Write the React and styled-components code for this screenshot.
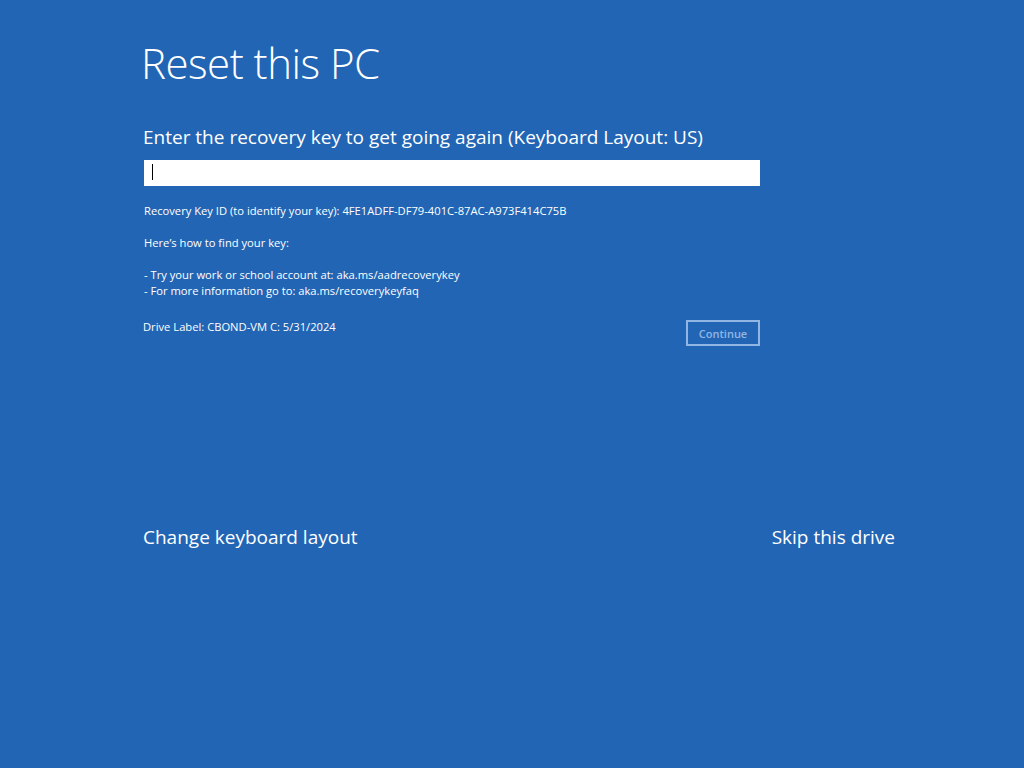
import React from 'react';
import styled, { createGlobalStyle } from 'styled-components';

const GlobalStyle = createGlobalStyle`
  * {
    margin: 0;
    padding: 0;
    box-sizing: border-box;
  }

  html, body {
    height: 100%;
  }

  body {
    background: #2265b4;
    color: #ffffff;
    font-family: 'Open Sans', 'Noto Sans', sans-serif;
    overflow: hidden;
  }
`;

const Screen = styled.div`
  width: 1024px;
  height: 768px;
  background: #2265b4;
  padding: 33px 0 0 141px;
  display: flex;
  flex-direction: column;
`;

const Title = styled.h1`
  font-size: 42px;
  font-weight: 300;
  line-height: 60px;
  letter-spacing: -0.5px;
`;

const Prompt = styled.h2`
  font-size: 19px;
  font-weight: 400;
  line-height: 26px;
  margin: 31px 0 0 2px;
`;

const Form = styled.div`
  width: 616px;
  margin-left: 3px;
`;

const KeyInput = styled.div`
  height: 26px;
  background: #ffffff;
  margin-top: 10px;
  padding: 4px 0 0 8px;
`;

const Caret = styled.span`
  display: block;
  width: 1px;
  height: 16px;
  background: #000000;
`;

const Info = styled.div`
  margin-top: 17px;
  font-size: 11.2px;
  line-height: 16px;
`;

const Line = styled.p`
  min-height: 16px;
`;

const FooterRow = styled.div`
  display: flex;
  align-items: flex-start;
  justify-content: space-between;
  margin-top: 20px;
`;

const DriveLabel = styled.p`
  font-size: 11.2px;
  line-height: 16px;
  margin-left: -1px;
`;

const ContinueButton = styled.button`
  width: 74px;
  height: 26px;
  background: transparent;
  border: 2px solid #92b6e4;
  color: #92b6e4;
  font-family: inherit;
  font-size: 11px;
  font-weight: 600;
  margin-top: 1px;
`;

const Links = styled.div`
  width: 752px;
  display: flex;
  justify-content: space-between;
  margin-top: 178px;
  margin-left: 2px;
`;

const LinkText = styled.span`
  font-size: 19px;
  line-height: 26px;
  font-weight: 400;
`;

export default function App() {
  return (
    <>
      <GlobalStyle />
      <Screen>
        <Title>Reset this PC</Title>
        <Prompt>Enter the recovery key to get going again (Keyboard Layout: US)</Prompt>
        <Form>
          <KeyInput>
            <Caret />
          </KeyInput>
          <Info>
            <Line>Recovery Key ID (to identify your key): 4FE1ADFF-DF79-401C-87AC-A973F414C75B</Line>
            <Line />
            <Line>Here’s how to find your key:</Line>
            <Line />
            <Line>- Try your work or school account at: aka.ms/aadrecoverykey</Line>
            <Line>- For more information go to: aka.ms/recoverykeyfaq</Line>
          </Info>
          <FooterRow>
            <DriveLabel>Drive Label: CBOND-VM C: 5/31/2024</DriveLabel>
            <ContinueButton>Continue</ContinueButton>
          </FooterRow>
        </Form>
        <Links>
          <LinkText>Change keyboard layout</LinkText>
          <LinkText>Skip this drive</LinkText>
        </Links>
      </Screen>
    </>
  );
}
